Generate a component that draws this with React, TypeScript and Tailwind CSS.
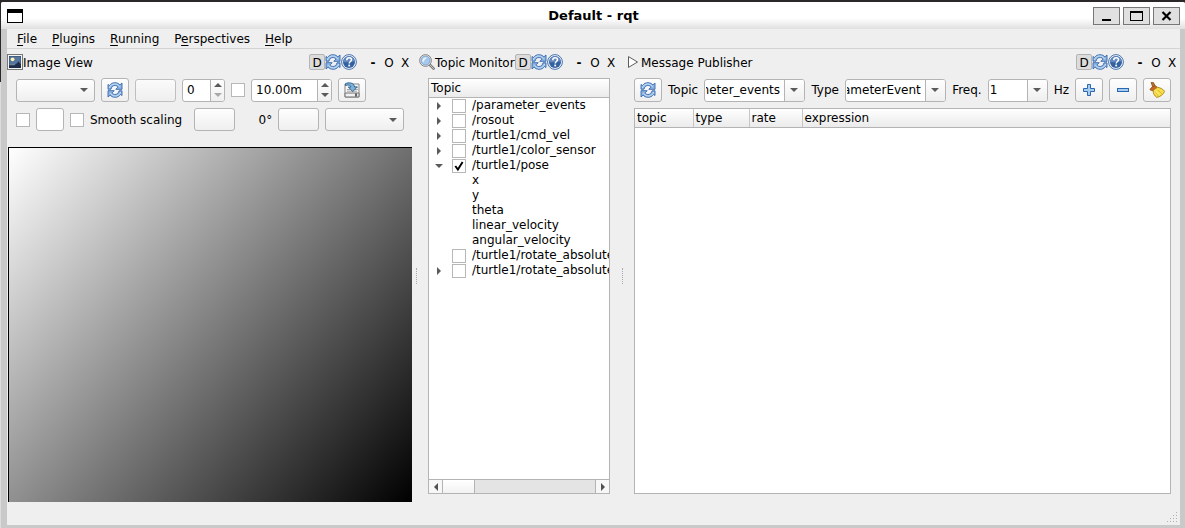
import { useEffect, useRef, useState } from "react";
import type { ReactNode } from "react";
import clsx from "clsx";

const MENUS = [
  { before: "", key: "F", after: "ile" },
  { before: "", key: "P", after: "lugins" },
  { before: "", key: "R", after: "unning" },
  { before: "P", key: "e", after: "rspectives" },
  { before: "", key: "H", after: "elp" },
];

interface TopicRow {
  name: string;
  branch?: "open" | "closed";
  field?: boolean;
}

const TOPICS: TopicRow[] = [
  { name: "/parameter_events", branch: "closed" },
  { name: "/rosout", branch: "closed" },
  { name: "/turtle1/cmd_vel", branch: "closed" },
  { name: "/turtle1/color_sensor", branch: "closed" },
  { name: "/turtle1/pose", branch: "open" },
  { name: "x", field: true },
  { name: "y", field: true },
  { name: "theta", field: true },
  { name: "linear_velocity", field: true },
  { name: "angular_velocity", field: true },
  { name: "/turtle1/rotate_absolute/_action/feedback" },
  { name: "/turtle1/rotate_absolute/_action/status", branch: "closed" },
];

const RAISED = "rounded-[3px] border border-[#b4b4b4] bg-linear-to-b from-[#fefefe] to-[#efefef]";

function RefreshIcon() {
  return (
    <svg viewBox="0 0 16 16" className="w-4 h-4 shrink-0">
      <g fill="#8fb6e2" stroke="#3468ad" strokeWidth="0.9" strokeLinejoin="round">
        <path d="M1 7.200V2.500L2.500 3.500C4 1.500 5.800.7 7.800.7c2.200 0 3.900.8 5.100 2.200L15 1V7.300H8.800L11 5.100C10.200 4 9.200 3.500 7.900 3.500 5.900 3.500 4.500 4.900 4 7.200z" />
        <path d="M15 8.800v4.700L13.500 12.500c-1.500 2-3.300 2.800-5.300 2.800-2.200 0-3.900-.8-5.100-2.200L1 15V8.700H7.200L5 10.900c.8 1.100 1.800 1.600 3.100 1.600 2 0 3.400-1.400 3.900-3.700z" />
      </g>
      <path d="M2.400 6C3 3.300 5.200 1.900 7.800 2c2.200.1 3.500 1 5 2.700M13.600 10c-.6 2.700-2.800 4.100-5.400 4-2.200-.1-3.500-1-5-2.700" fill="none" stroke="#d9e8f8" strokeWidth="0.8" />
    </svg>
  );
}

function HelpIcon() {
  return (
    <svg viewBox="0 0 16 16" className="w-4 h-4 shrink-0">
      <circle cx="8" cy="8" r="7.400" fill="#f0f5fb" stroke="#4a73ac" strokeWidth="1" />
      <circle cx="8" cy="8" r="6" fill="#34619f" />
      <path d="M2.200 8a5.800 5.800 0 0 1 11.600 0C10 6.600 6 9.200 2.200 8z" fill="#6389c0" />
      <path d="M5.700 6.200C5.800 4.500 6.800 3.800 8.100 3.800c1.500 0 2.400.8 2.400 2C10.500 7.500 8.300 7.500 8.200 9.500" fill="none" stroke="#fff" strokeWidth="1.500" />
      <rect x="7.300" y="10.600" width="1.800" height="1.800" fill="#fff" />
    </svg>
  );
}

function ImageIcon() {
  return (
    <svg viewBox="0 0 16 16" className="w-4 h-4 shrink-0">
      <rect x="0.500" y="0.500" width="15" height="15" fill="#f4f4f2" stroke="#777" />
      <rect x="2" y="2" width="12" height="12" fill="#33496d" />
      <rect x="2.500" y="2.500" width="11" height="7.500" fill="#56769f" />
      <circle cx="5.600" cy="5.300" r="1.900" fill="#fbf3ae" />
      <path d="M2 11.500l6-.5 3.500-3.500 2.500 3V14H2z" fill="#1f2e48" />
      <path d="M2.500 10.700h5.500" stroke="#8fa3bd" strokeWidth="0.800" />
    </svg>
  );
}

function SearchIcon() {
  return (
    <svg viewBox="0 0 16 16" className="w-4 h-4 shrink-0">
      <path d="M10 10l4.600 4.600" stroke="#777" strokeWidth="2.600" strokeLinecap="round" />
      <path d="M10.500 10.500l4 4" stroke="#c8c8c8" strokeWidth="1" strokeLinecap="round" />
      <circle cx="6.500" cy="6.500" r="5.900" fill="#e9e9e9" stroke="#7b7b7b" strokeWidth="0.900" />
      <circle cx="6.500" cy="6.500" r="4.500" fill="#a5c8ee" stroke="#6e93bf" strokeWidth="0.700" />
      <path d="M3.300 6.500a3.200 3.200 0 0 1 4.800-2.800C6.700 4.500 5 6 4.400 8.600A3.200 3.200 0 0 1 3.300 6.500z" fill="#e6f2fd" />
    </svg>
  );
}

function PlayIcon() {
  return (
    <svg viewBox="0 0 15 16" className="w-[15px] h-4 shrink-0">
      <path d="M2.500 2.600v10.800L11.500 8z" fill="#fff" stroke="#5c5c5c" />
    </svg>
  );
}

function SaveIcon() {
  return (
    <svg viewBox="0 0 16 16" className="w-4 h-4 shrink-0">
      <path d="M1 2h14v13H1z" fill="#f6f6f6" stroke="#858585" />
      <path d="M1 11h14v4H1z" fill="#e4e4e4" stroke="#777" />
      <path d="M3 7.500h3M10.500 7.500H14M3 9.200h10M10.500 5H14" stroke="#a5a5a5" />
      <path d="M2.500 13h8" stroke="#fff" />
      <path d="M12 11.500v3" stroke="#111" strokeWidth="1.200" />
      <path d="M1.500 1.700C4.200.2 9.800.2 10.600 5h2.600L8.700 9.600 4.300 5h2.600C6.600 3 4.500 2.700 1.500 3.500z" fill="#7fb0d6" stroke="#245f8f" strokeWidth="0.900" />
    </svg>
  );
}

function PlusIcon() {
  return (
    <svg viewBox="0 0 16 16" className="w-4 h-4 shrink-0">
      <path d="M6.500 2.500h3v4h4v3h-4v4h-3v-4h-4v-3h4z" fill="#a6cdf0" stroke="#2a66b1" />
    </svg>
  );
}

function MinusIcon() {
  return (
    <svg viewBox="0 0 16 16" className="w-4 h-4 shrink-0">
      <rect x="2.500" y="6.500" width="11" height="3" fill="#a6cdf0" stroke="#2a66b1" />
    </svg>
  );
}

function BroomIcon() {
  return (
    <svg viewBox="0 0 16 16" className="w-4 h-4 shrink-0">
      <path d="M2 .5L4.400.4 6.300 4 3.800 5.200z" fill="#b5702a" stroke="#7d4a15" strokeWidth="0.700" />
      <path d="M.9 7.800C2 5.200 4 3.600 7.200 4.200l1.300 1.600L4 9z" fill="#c9632b" stroke="#8c5a10" strokeWidth="0.700" />
      <path d="M4.300 8.300L8.400 5.300c3.100.5 6 2 7.200 4.100-1.300 3-4 5.200-7.800 6C5.500 14 4 11.300 4.300 8.300z" fill="#fadf4c" stroke="#a5830f" strokeWidth="0.900" />
      <path d="M6.500 9l2.600 4.900M8.700 7.800l4 4" stroke="#d1ab1d" strokeWidth="0.800" />
      <path d="M6 8.300l3.500 4.200" stroke="#fff7b0" strokeWidth="0.800" />
    </svg>
  );
}

function DownArrow({ dim }: { dim?: boolean }) {
  return (
    <svg viewBox="0 0 8 4" className="w-2 h-1 pointer-events-none">
      <path d="M0 0h8L4 4z" fill={dim ? "#a9a9a9" : "#5a5a5a"} />
    </svg>
  );
}

function ToolButton({ label, children }: { label: string; children: ReactNode }) {
  return (
    <button aria-label={label} className={clsx(RAISED, "w-7 h-6 shrink-0 flex items-center justify-center")}>
      {children}
    </button>
  );
}

function Combo({ label }: { label: string }) {
  return (
    <div className="relative w-[79px] h-[23px] shrink-0">
      <select aria-label={label} className={clsx(RAISED, "block w-full h-full appearance-none")}>
        <option></option>
      </select>
      <span className="absolute inset-y-0 right-[7px] flex items-center pointer-events-none">
        <DownArrow />
      </span>
    </div>
  );
}

function EditCombo({ id, value, className }: { id: string; value: string; className: string }) {
  const [text, setText] = useState(value);
  const ref = useRef<HTMLInputElement>(null);

  // Long names keep their tail in view
  useEffect(() => {
    if (ref.current) ref.current.scrollLeft = ref.current.scrollWidth;
  }, []);

  return (
    <div className={clsx("h-[23px] flex min-w-0 rounded-[3px] border border-[#b4b4b4] bg-white overflow-hidden", className)}>
      <div className="flex-1 min-w-0 flex pl-px pr-1">
        <input ref={ref} id={id} value={text} onChange={(e) => setText(e.target.value)} className="w-full min-w-0 bg-transparent outline-none" />
      </div>
      <button aria-label="Show list" className="w-5 shrink-0 border-l border-[#b4b4b4] bg-linear-to-b from-[#fefefe] to-[#efefef] flex items-center pl-[5px]">
        <DownArrow />
      </button>
    </div>
  );
}

function Spin({ label, value, className, atMin }: { label: string; value: string; className: string; atMin?: boolean }) {
  const [text, setText] = useState(value);
  return (
    <div className={clsx("h-[23px] shrink-0 flex rounded-[3px] border border-[#b4b4b4] bg-white overflow-hidden", className)}>
      <input aria-label={label} value={text} onChange={(e) => setText(e.target.value)} className="flex-1 w-full min-w-0 pl-1 bg-transparent outline-none" />
      <div className="w-3.5 shrink-0 flex flex-col border-l border-[#b4b4b4] bg-linear-to-b from-[#fefefe] to-[#efefef]">
        <button aria-label="Increase" className="flex-1 flex items-center justify-center">
          <span className="rotate-180 flex">
            <DownArrow />
          </span>
        </button>
        <button aria-label="Decrease" className="flex-1 flex items-center justify-center">
          <DownArrow dim={atMin} />
        </button>
      </div>
    </div>
  );
}

function Check({ id, label, initial }: { id?: string; label?: string; initial?: boolean }) {
  const [on, setOn] = useState(!!initial);
  return (
    <span className="relative w-3.5 h-3.5 shrink-0 block">
      <input
        id={id}
        type="checkbox"
        aria-label={label}
        checked={on}
        onChange={(e) => setOn(e.target.checked)}
        className="block w-3.5 h-3.5 appearance-none border border-[#b7b7b7] bg-white"
      />
      {on && (
        <svg viewBox="0 0 14 14" className="absolute inset-0 pointer-events-none">
          <path d="M3.300 7l2.600 3.600L10.600 3" fill="none" stroke="#000" strokeWidth="1.900" />
        </svg>
      )}
    </span>
  );
}

function DockTitle({ icon, title }: { icon: ReactNode; title: string }) {
  return (
    <header className="h-[26px] flex items-center">
      {icon}
      <h2 className="flex-1 min-w-0 pt-0.5 whitespace-nowrap">{title}</h2>
      <button className="w-4 h-4 shrink-0 rounded-[2px] border border-[#b4b4b4] bg-[#dcdcdc] flex items-center justify-center pt-0.5">D</button>
      <button aria-label="Reload" className="flex">
        <RefreshIcon />
      </button>
      <button aria-label="Help" className="flex mr-2">
        <HelpIcon />
      </button>
      {["-", "O", "X"].map((s) => (
        <button key={s} className={clsx("w-4 h-4 shrink-0 flex items-center justify-center pt-0.5", s === "-" && "font-bold")}>
          {s}
        </button>
      ))}
    </header>
  );
}

function Splitter() {
  return (
    <div className="flex flex-col items-center justify-center cursor-col-resize">
      <div className="w-0 h-4 border-l border-dotted border-[#aaa]" />
    </div>
  );
}

function ImageView() {
  return (
    <section className="flex flex-col min-w-0">
      <DockTitle icon={<ImageIcon />} title="Image View" />
      <div className="pl-[9px] pt-[3px] flex flex-col gap-1.5">
        <div className="h-6 flex items-center gap-1.5">
          <Combo label="Image topic" />
          <ToolButton label="Refresh topics">
            <RefreshIcon />
          </ToolButton>
          <button aria-label="Zoom" disabled className={clsx(RAISED, "w-[41px] h-[23px] opacity-80")} />
          <Spin label="Gridlines" value="0" className="w-[43px]" atMin />
          <Check label="Dynamic range" />
          <Spin label="Maximum range" value="10.00m" className="w-[81px]" />
          <ToolButton label="Save image">
            <SaveIcon />
          </ToolButton>
        </div>
        <div className="h-[23px] flex items-center gap-1.5">
          <Check label="Publish click" />
          <input aria-label="Click topic" className="w-7 h-[23px] rounded-[3px] border border-[#b4b4b4] bg-white" />
          <Check id="smooth" />
          <label htmlFor="smooth" className="whitespace-nowrap">
            Smooth scaling
          </label>
          <button aria-label="Rotate left" className={clsx(RAISED, "w-[41px] h-[23px] ml-1.5")} />
          <span className="w-[31px] text-right">0°</span>
          <button aria-label="Rotate right" className={clsx(RAISED, "w-[41px] h-[23px]")} />
          <Combo label="Color scheme" />
        </div>
      </div>
      <div className="flex-1 mt-4 mx-px border-t border-l border-black bg-[linear-gradient(131deg,#fff,#000)]" />
    </section>
  );
}

function TopicMonitor() {
  return (
    <section className="flex flex-col min-w-0">
      <DockTitle icon={<SearchIcon />} title="Topic Monitor" />
      <div className="flex-1 mx-[9px] mt-[3px] mb-2 border border-[#b4b4b4] bg-white flex flex-col min-w-0">
        <div className="h-[19px] shrink-0 px-0.5 flex items-center border-b border-[#b4b4b4] bg-linear-to-b from-white to-[#ebebeb]">Topic</div>
        <ul className="flex-1 overflow-hidden leading-[15px]">
          {TOPICS.map((t) => (
            <li key={t.name} className="h-[15px] flex items-center pl-1 whitespace-nowrap">
              <span className="w-[19px] shrink-0 flex pl-0.5">
                {t.branch === "closed" && (
                  <svg viewBox="0 0 8 8" className="w-2 h-2">
                    <path d="M2 0v8l4-4z" fill="#5a5a5a" />
                  </svg>
                )}
                {t.branch === "open" && <DownArrow />}
              </span>
              {t.field ? <span className="w-3.5 shrink-0" /> : <Check label={t.name} initial={t.branch === "open"} />}
              <span className="ml-1.5">{t.name}</span>
            </li>
          ))}
        </ul>
        <div className="h-3.5 shrink-0 flex border-t border-[#b4b4b4] bg-[#e4e4e4]">
          <button aria-label="Scroll left" className="w-3.5 shrink-0 border-r border-[#b4b4b4] bg-[#f7f7f7] flex items-center justify-center">
            <svg viewBox="0 0 8 8" className="w-2 h-2">
              <path d="M6 0v8L2 4z" fill="#505050" />
            </svg>
          </button>
          <div className="w-[18%] border-r border-[#b4b4b4] bg-linear-to-b from-white to-[#f2f2f2]" />
          <button aria-label="Scroll right" className="w-3.5 shrink-0 ml-auto border-l border-[#b4b4b4] bg-[#f7f7f7] flex items-center justify-center">
            <svg viewBox="0 0 8 8" className="w-2 h-2">
              <path d="M2 0v8l4-4z" fill="#505050" />
            </svg>
          </button>
        </div>
      </div>
    </section>
  );
}

function MessagePublisher() {
  return (
    <section className="flex flex-col min-w-0">
      <DockTitle icon={<PlayIcon />} title="Message Publisher" />
      <div className="flex-1 flex flex-col gap-1.5 pl-2 pr-[9px] pt-[3px] pb-2">
        <div className="h-6 flex items-center gap-1.5">
          <ToolButton label="Refresh topics">
            <RefreshIcon />
          </ToolButton>
          <label htmlFor="topic">Topic</label>
          <EditCombo id="topic" value="/parameter_events" className="flex-1" />
          <label htmlFor="type">Type</label>
          <EditCombo id="type" value="rcl_interfaces/msg/ParameterEvent" className="flex-1" />
          <label htmlFor="freq">Freq.</label>
          <EditCombo id="freq" value="1" className="w-15 shrink-0" />
          <span>Hz</span>
          <ToolButton label="Add publisher">
            <PlusIcon />
          </ToolButton>
          <ToolButton label="Remove publisher">
            <MinusIcon />
          </ToolButton>
          <ToolButton label="Clear publishers">
            <BroomIcon />
          </ToolButton>
        </div>
        <div className="flex-1 border border-[#b4b4b4] bg-white">
          <table className="w-full table-fixed border-collapse">
            <thead>
              <tr className="h-[18px] bg-linear-to-b from-white to-[#ebebeb] text-left shadow-[0_1px_0_#b4b4b4]">
                <th className="w-[58px] h-[18px] px-0.5 py-0 font-normal border-r border-[#c6c6c6]">topic</th>
                <th className="w-14 px-0.5 py-0 font-normal border-r border-[#c6c6c6]">type</th>
                <th className="w-[53px] px-0.5 py-0 font-normal border-r border-[#c6c6c6]">rate</th>
                <th className="px-0.5 py-0 font-normal">expression</th>
              </tr>
            </thead>
          </table>
        </div>
      </div>
    </section>
  );
}

function TitleBar() {
  const button = "w-[27px] h-[18px] border border-[#777] bg-[#e0e0e0] flex items-center justify-center";
  return (
    <div className="h-[27px] flex items-center bg-linear-to-b from-white from-60% to-[#e0e0e0] pl-1.5 pr-[5px]">
      <div className="flex-1">
        <svg viewBox="0 0 16 14" className="w-4 h-3.5">
          <rect x="0.500" y="0.500" width="15" height="13" fill="#fff" stroke="#000" />
          <rect width="16" height="4" />
        </svg>
      </div>
      <h1 className="text-[13px] font-bold">Default - rqt</h1>
      <div className="flex-1 flex justify-end gap-[3px]">
        <button aria-label="Minimize" className={button}>
          <svg viewBox="0 0 13 12" className="w-[13px] h-3">
            <path d="M2 9h9v2H2z" />
          </svg>
        </button>
        <button aria-label="Maximize" className={button}>
          <svg viewBox="0 0 13 12" className="w-[13px] h-3">
            <path d="M0 1h13v10H0zM1 3v7h11V3z" fillRule="evenodd" />
          </svg>
        </button>
        <button aria-label="Close" className={button}>
          <svg viewBox="0 0 13 12" className="w-[13px] h-3">
            <path d="M2.500 2l8 8M10.500 2l-8 8" stroke="#000" strokeWidth="2.200" />
          </svg>
        </button>
      </div>
    </div>
  );
}

export default function App() {
  return (
    <div className="min-h-screen flex flex-col bg-[#2b2829] pt-0.5 font-['DejaVu_Sans',sans-serif] text-[12px] leading-4 text-black">
      <div className="flex-1 flex">
        {/* Sliver of the desktop left of the window */}
        <div className="w-px shrink-0 flex flex-col">
          <div className="h-20" />
          <div className="flex-1 bg-[#dcdcdc]" />
        </div>
        <div className="flex-1 min-w-0 flex flex-col rounded-t-[2px] overflow-hidden bg-[#c9c9c9]">
          <TitleBar />
          <main className="flex-1 flex flex-col ml-1.5 mr-[5px] mb-[3px] bg-[#efefef]">
            <nav className="h-5 flex items-center gap-[15px] pl-2.5 border-b border-[#d4d4d4]">
              {MENUS.map((m) => (
                <button key={m.after}>
                  {m.before}
                  <span className="underline underline-offset-2">{m.key}</span>
                  {m.after}
                </button>
              ))}
            </nav>
            <div className="flex-1 grid grid-cols-[minmax(0,406fr)_6px_minmax(0,200fr)_7px_minmax(0,554fr)]">
              <ImageView />
              <Splitter />
              <TopicMonitor />
              <Splitter />
              <MessagePublisher />
            </div>
            <footer className="h-[23px] flex justify-end items-end p-0.5">
              <svg viewBox="0 0 11 11" className="w-[11px] h-[11px]">
                <path d="M9 0h1v1H9zM9 3h1v1H9zM6 3h1v1H6zM9 6h1v1H9zM6 6h1v1H6zM3 6h1v1H3zM9 9h1v1H9zM6 9h1v1H6zM3 9h1v1H3zM0 9h1v1H0z" fill="#b0b0b0" />
              </svg>
            </footer>
          </main>
        </div>
      </div>
    </div>
  );
}
